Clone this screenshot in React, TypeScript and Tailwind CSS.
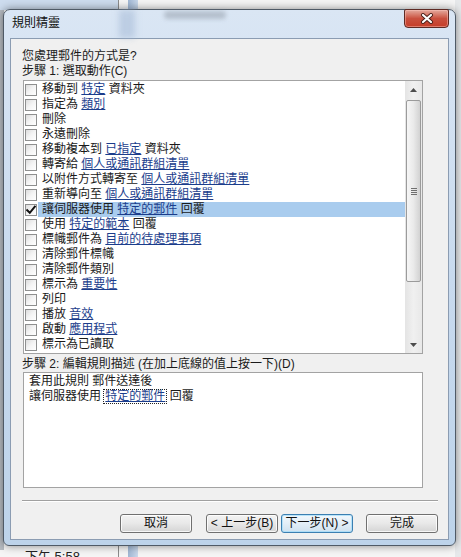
import React from "react";

type Part = string | { l: string };

const rows: Part[][] = [
  ["移動到 ", { l: "特定" }, " 資料夾"],
  ["指定為 ", { l: "類別" }],
  ["刪除"],
  ["永遠刪除"],
  ["移動複本到 ", { l: "已指定" }, " 資料夾"],
  ["轉寄給 ", { l: "個人或通訊群組清單" }],
  ["以附件方式轉寄至 ", { l: "個人或通訊群組清單" }],
  ["重新導向至 ", { l: "個人或通訊群組清單" }],
  ["讓伺服器使用 ", { l: "特定的郵件" }, " 回覆"],
  ["使用 ", { l: "特定的範本" }, " 回覆"],
  ["標幟郵件為 ", { l: "目前的待處理事項" }],
  ["清除郵件標幟"],
  ["清除郵件類別"],
  ["標示為 ", { l: "重要性" }],
  ["列印"],
  ["播放 ", { l: "音效" }],
  ["啟動 ", { l: "應用程式" }],
  ["標示為已讀取"],
];

const LINK = "text-[#1b3d8c] underline decoration-[#1b3d8c] underline-offset-[1px]";

function Checkbox({ checked }: { checked?: boolean }) {
  return (
    <div className="relative w-[12px] h-[12px] shrink-0 border border-[#8e8f8f] bg-gradient-to-br from-[#dcdcdc] via-[#f4f4f4] to-[#ffffff]">
      {checked && (
        <svg className="absolute left-[0px] top-[0px]" width="10" height="10" viewBox="0 0 10 10">
          <path d="M1.2 5.2 L3.8 7.8 L8.8 1.6" fill="none" stroke="#111" strokeWidth="2" strokeLinecap="square" />
        </svg>
      )}
    </div>
  );
}

function Button({ children, primary }: { children: React.ReactNode; primary?: boolean }) {
  return (
    <div
      className={
        "w-[72px] h-[19px] rounded-[3px] border flex items-center justify-center text-[12px] leading-[17px] text-[#111] " +
        (primary
          ? "border-[#3c7fb1] bg-gradient-to-b from-[#f2f8fc] via-[#e3eef7] to-[#cfe1ef] shadow-[inset_0_0_0_1px_rgba(160,220,250,0.7)]"
          : "border-[#707070] bg-gradient-to-b from-[#f3f3f3] via-[#e8e8e8] to-[#d4d4d4] shadow-[inset_0_0_0_1px_rgba(255,255,255,0.8)]")
      }
    >
      {children}
    </div>
  );
}

function Scrollbar() {
  return (
    <div className="w-[17px] h-full flex flex-col bg-gradient-to-r from-[#e4e4e4] via-[#f0f0f0] to-[#e8e8e8]">
      <div className="h-[17px] flex items-center justify-center">
        <svg width="7" height="4" viewBox="0 0 7 4">
          <path d="M0 4 L3.5 0 L7 4 Z" fill="#4d4d4d" />
        </svg>
      </div>
      <div className="mx-[1px] mt-[2px] h-[182px] rounded-[2px] border border-[#9b9b9b] bg-gradient-to-r from-[#f6f6f6] via-[#eaeaea] to-[#d2d2d2] flex flex-col items-center justify-center gap-[1px]">
        <div className="w-[6px] h-[1px] bg-[#6f6f6f]" />
        <div className="w-[6px] h-[1px] bg-[#6f6f6f]" />
        <div className="w-[6px] h-[1px] bg-[#6f6f6f]" />
        <div className="w-[6px] h-[1px] bg-[#6f6f6f]" />
      </div>
      <div className="flex-1" />
      <div className="h-[17px] flex items-center justify-center">
        <svg width="7" height="4" viewBox="0 0 7 4">
          <path d="M0 0 L3.5 4 L7 0 Z" fill="#4d4d4d" />
        </svg>
      </div>
    </div>
  );
}

export default function App() {
  return (
    <div className="relative w-[461px] h-[557px] overflow-hidden bg-[#f5f5f5] font-['Liberation_Sans','Noto_Sans_CJK_TC',sans-serif] text-[12px] text-[#1a1a1a]">
      {/* desktop / background windows */}
      <div className="absolute left-0 top-0 w-[118px] h-[10px] bg-[#cddcee]" />
      <div className="absolute left-[118px] top-0 w-[1px] h-[557px] bg-[#8b8b8b]" />
      <div className="absolute left-[128px] top-0 w-[10px] h-[557px] bg-gradient-to-r from-[#9fb6d3] to-[#c9d8ea]" />
      <div className="absolute left-0 top-[10px] w-[4px] h-[540px] bg-[#b7bcc2]" />
      <div className="absolute right-0 top-0 w-[6px] h-[557px] bg-[#e6e8ea]" />
      <div className="absolute left-[25px] top-[549px] text-[13px] leading-[15px] text-[#222]">下午 5:58</div>

      {/* dialog window */}
      <div className="absolute left-[3px] top-[9px] w-[453px] h-[537px] rounded-t-[7px] rounded-b-[6px] border border-[#4f5a66] bg-gradient-to-b from-[#dae6f4] via-[#c8daee] to-[#bdd3ea] shadow-[0_0_8px_rgba(0,0,0,0.45)] flex flex-col">
        <div className="absolute left-[160px] top-[1px] w-[62px] h-[8px] rounded-full bg-[#7d8694]/40 blur-[2px]" />
        <div className="absolute left-[115px] top-[0px] w-[16px] h-[28px] bg-[#9fb6d3]/50 blur-[3px]" />
        {/* title bar */}
        <div className="h-[28px] pl-[8px] leading-[26px] text-[12px] text-[#111] relative">
          規則精靈
          <div className="absolute right-[6px] top-[-1px] w-[45px] h-[19px] rounded-b-[4px] rounded-t-[2px] border border-[#5e2a24] bg-gradient-to-b from-[#e3a99e] via-[#c9503f] to-[#c53d28] shadow-[inset_0_0_0_1px_rgba(255,200,190,0.45)] flex items-center justify-center">
            <svg width="14" height="11" viewBox="0 0 14 11">
              <path d="M3 2 L11 9 M11 2 L3 9" stroke="#4a1e18" strokeWidth="4" strokeLinecap="round" />
              <path d="M3 2 L11 9 M11 2 L3 9" stroke="#ffffff" strokeWidth="2.2" strokeLinecap="round" />
            </svg>
          </div>
        </div>

        {/* client area */}
        <div className="ml-[6px] w-[439px] h-[502px] border border-[#8b9cb2] bg-[#f0f0f0] pl-[11px] flex flex-col">
          <div className="mt-[10px] h-[15px] leading-[15px]">您處理郵件的方式是?</div>
          <div className="h-[14px] leading-[14px]">步驟 1: 選取動作(C)</div>

          {/* action list */}
          <div className="mt-[2px] ml-[1px] w-[400px] h-[274px] border border-[#a3a3a3] bg-white flex">
            <div className="flex-1 pt-[1px] flex flex-col">
              {rows.map((parts, i) => {
                const selected = i === 8;
                return (
                  <div key={i} className="h-[15px] flex items-center">
                    <div className="ml-[1px]">
                      <Checkbox checked={selected} />
                    </div>
                    <div
                      className={
                        "h-[15px] flex-1 ml-[1px] pl-[4px] leading-[15px] whitespace-pre " +
                        (selected ? "bg-[#a9ccee]" : "")
                      }
                    >
                      {parts.map((p, j) =>
                        typeof p === "string" ? (
                          <span key={j}>{p}</span>
                        ) : (
                          <span key={j} className={LINK}>
                            {p.l}
                          </span>
                        )
                      )}
                    </div>
                  </div>
                );
              })}
            </div>
            <Scrollbar />
          </div>

          <div className="mt-[2px] h-[16px] leading-[16px]">步驟 2: 編輯規則描述 (在加上底線的值上按一下)(D)</div>

          {/* description box */}
          <div className="ml-[1px] w-[400px] h-[116px] border border-[#a3a3a3] bg-white pt-[1px] pl-[5px] flex flex-col">
            <div className="h-[15px] leading-[15px] whitespace-pre">套用此規則 郵件送達後</div>
            <div className="h-[15px] leading-[15px] whitespace-pre flex items-center">
              <span>讓伺服器使用 </span>
              <span className="outline outline-1 outline-dotted outline-[#222] h-[13px] leading-[13px] px-[1px]">
                <span className={LINK}>特定的郵件</span>
              </span>
              <span> 回覆</span>
            </div>
          </div>

          {/* separator */}
          <div className="mt-[12px] w-[416px] h-[1px] bg-[#a0a0a0]" />
          <div className="w-[416px] h-[1px] bg-white" />

          {/* buttons */}
          <div className="mt-[12px] flex ml-[98px]">
            <Button>取消</Button>
            <div className="ml-[14px]">
              <Button>&lt; 上一步(B)</Button>
            </div>
            <div className="ml-[3px]">
              <Button primary>下一步(N) &gt;</Button>
            </div>
            <div className="ml-[13px]">
              <Button>完成</Button>
            </div>
          </div>
        </div>
      </div>
    </div>
  );
}
